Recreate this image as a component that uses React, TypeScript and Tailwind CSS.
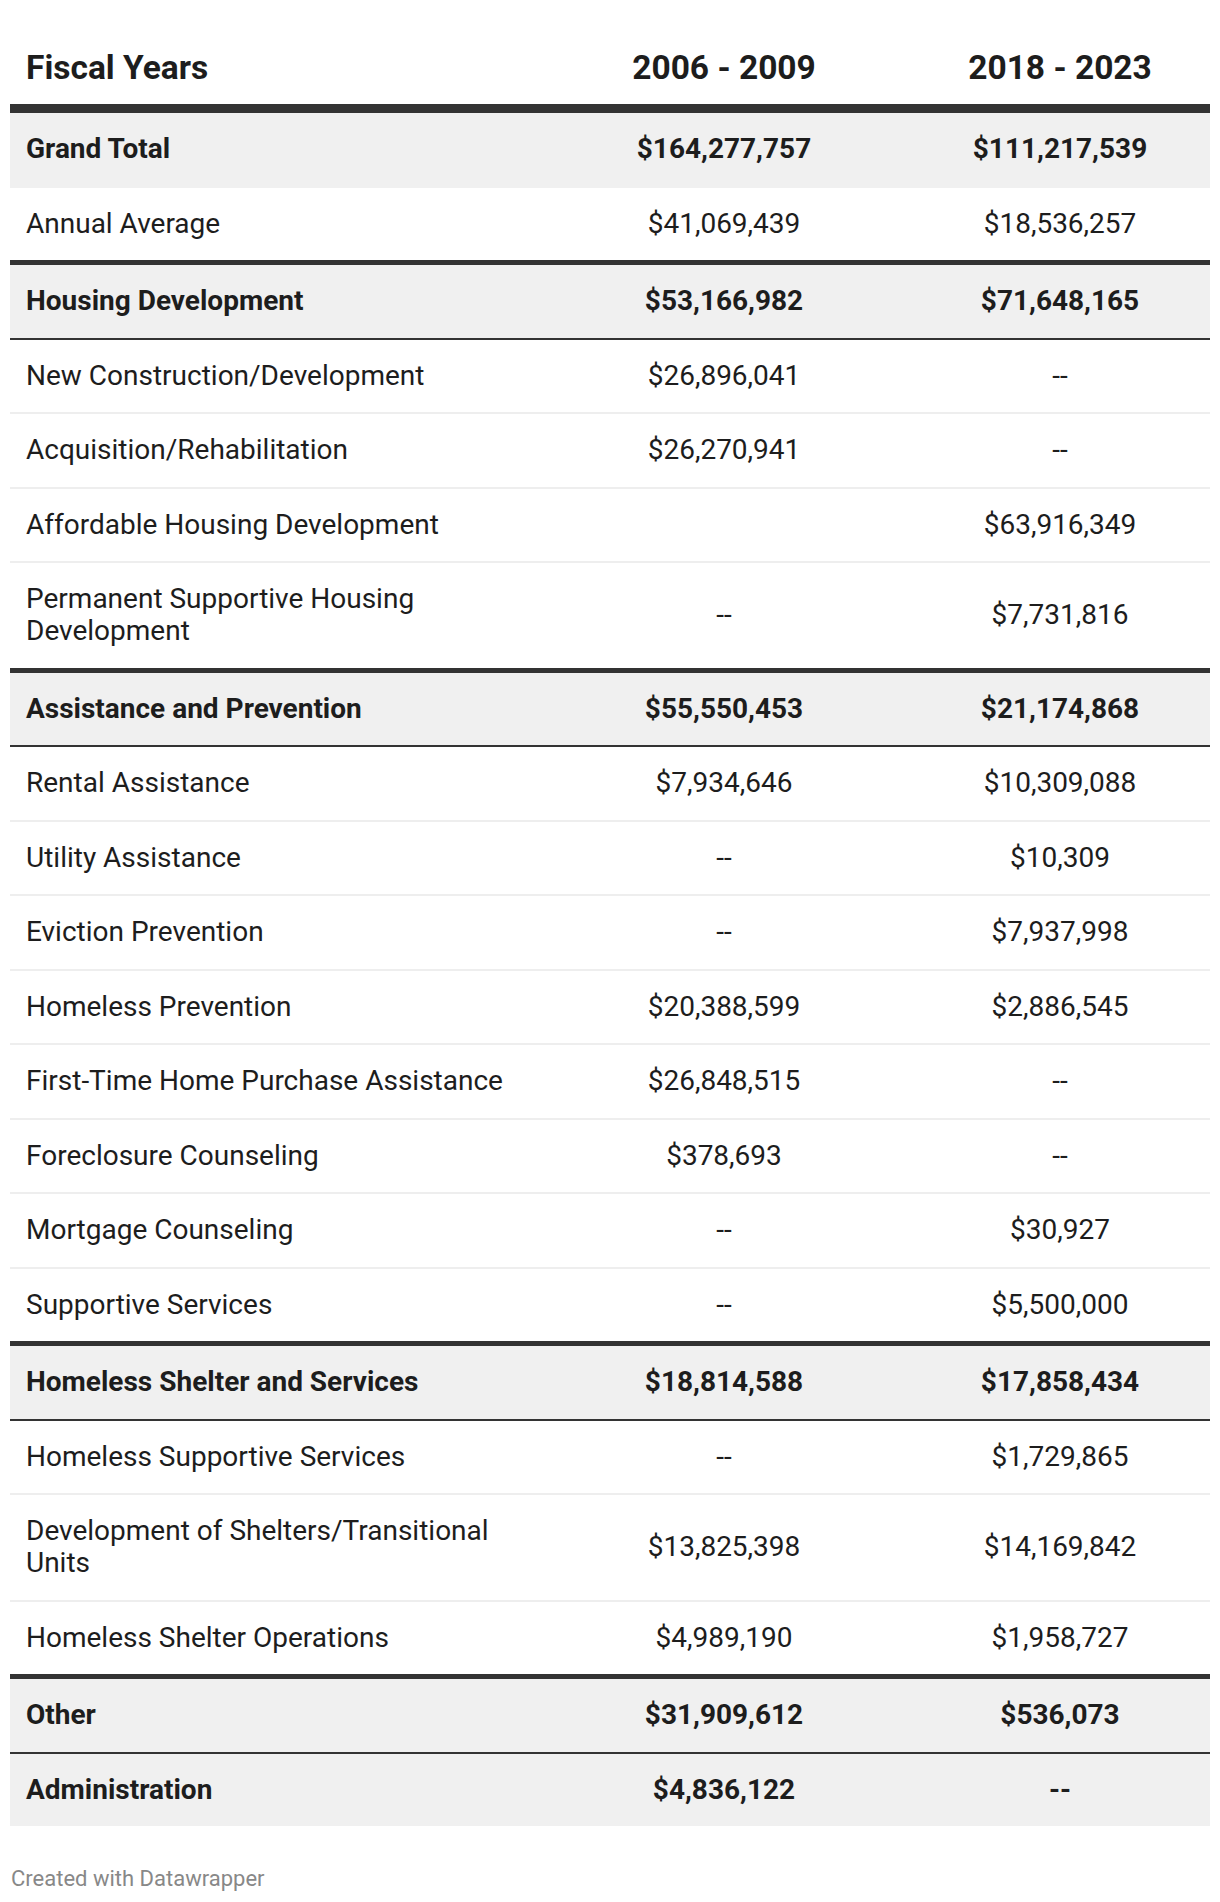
type Row = {
  label: string;
  a: string;
  b: string;
  group?: boolean;
  line: "light" | "dark" | "thick" | "none" | "hidden";
};

const rows: Row[] = [
  { label: "Grand Total", a: "$164,277,757", b: "$111,217,539", group: true, line: "hidden" },
  { label: "Annual Average", a: "$41,069,439", b: "$18,536,257", line: "thick" },
  { label: "Housing Development", a: "$53,166,982", b: "$71,648,165", group: true, line: "dark" },
  { label: "New Construction/Development", a: "$26,896,041", b: "--", line: "light" },
  { label: "Acquisition/Rehabilitation", a: "$26,270,941", b: "--", line: "light" },
  { label: "Affordable Housing Development", a: "", b: "$63,916,349", line: "light" },
  { label: "Permanent Supportive Housing Development", a: "--", b: "$7,731,816", line: "thick" },
  { label: "Assistance and Prevention", a: "$55,550,453", b: "$21,174,868", group: true, line: "dark" },
  { label: "Rental Assistance", a: "$7,934,646", b: "$10,309,088", line: "light" },
  { label: "Utility Assistance", a: "--", b: "$10,309", line: "light" },
  { label: "Eviction Prevention", a: "--", b: "$7,937,998", line: "light" },
  { label: "Homeless Prevention", a: "$20,388,599", b: "$2,886,545", line: "light" },
  { label: "First-Time Home Purchase Assistance", a: "$26,848,515", b: "--", line: "light" },
  { label: "Foreclosure Counseling", a: "$378,693", b: "--", line: "light" },
  { label: "Mortgage Counseling", a: "--", b: "$30,927", line: "light" },
  { label: "Supportive Services", a: "--", b: "$5,500,000", line: "thick" },
  { label: "Homeless Shelter and Services", a: "$18,814,588", b: "$17,858,434", group: true, line: "dark" },
  { label: "Homeless Supportive Services", a: "--", b: "$1,729,865", line: "light" },
  { label: "Development of Shelters/Transitional Units", a: "$13,825,398", b: "$14,169,842", line: "light" },
  { label: "Homeless Shelter Operations", a: "$4,989,190", b: "$1,958,727", line: "thick" },
  { label: "Other", a: "$31,909,612", b: "$536,073", group: true, line: "dark" },
  { label: "Administration", a: "$4,836,122", b: "--", group: true, line: "none" },
];

const lineClass = {
  light: "border-b-2 border-[#eeeeee]",
  dark: "border-b-2 border-[#333333]",
  thick: "border-b-[5px] border-[#333333]",
  hidden: "border-b-2 border-[#f0f0f0]",
  none: "",
};

const TableRow = ({ row }: { row: Row }) => {
  return (
    <div
      className={`flex items-center ${lineClass[row.line]} ${
        row.group ? "bg-[#f0f0f0] font-bold" : "bg-white"
      }`}
    >
      <div className="w-[528px] py-[20.25px] pl-4 pr-4 leading-[32px]">{row.label}</div>
      <div className="w-[372px] py-[20.25px] text-center leading-[32px]">{row.a}</div>
      <div className="w-[300px] py-[20.25px] text-center leading-[32px]">{row.b}</div>
    </div>
  );
};

export default function App() {
  return (
    <div className="min-h-[1902px] bg-white px-[10px] font-['Roboto',sans-serif] text-[#1d1d1d]">
      <div className="w-[1200px] text-[28px]">
        <div className="flex border-b-[9px] border-[#333333] pt-[48px] pb-[16px] text-[33.5px] font-bold leading-[40px]">
          <div className="w-[528px] pl-4">Fiscal Years</div>
          <div className="w-[372px] text-center">2006 - 2009</div>
          <div className="w-[300px] text-center">2018 - 2023</div>
        </div>
        {rows.map((row) => (
          <TableRow key={row.label} row={row} />
        ))}
      </div>
      <p className="mt-[40px] pl-px text-[22px] leading-[26px] text-[#888888]">
        Created with Datawrapper
      </p>
    </div>
  );
}
